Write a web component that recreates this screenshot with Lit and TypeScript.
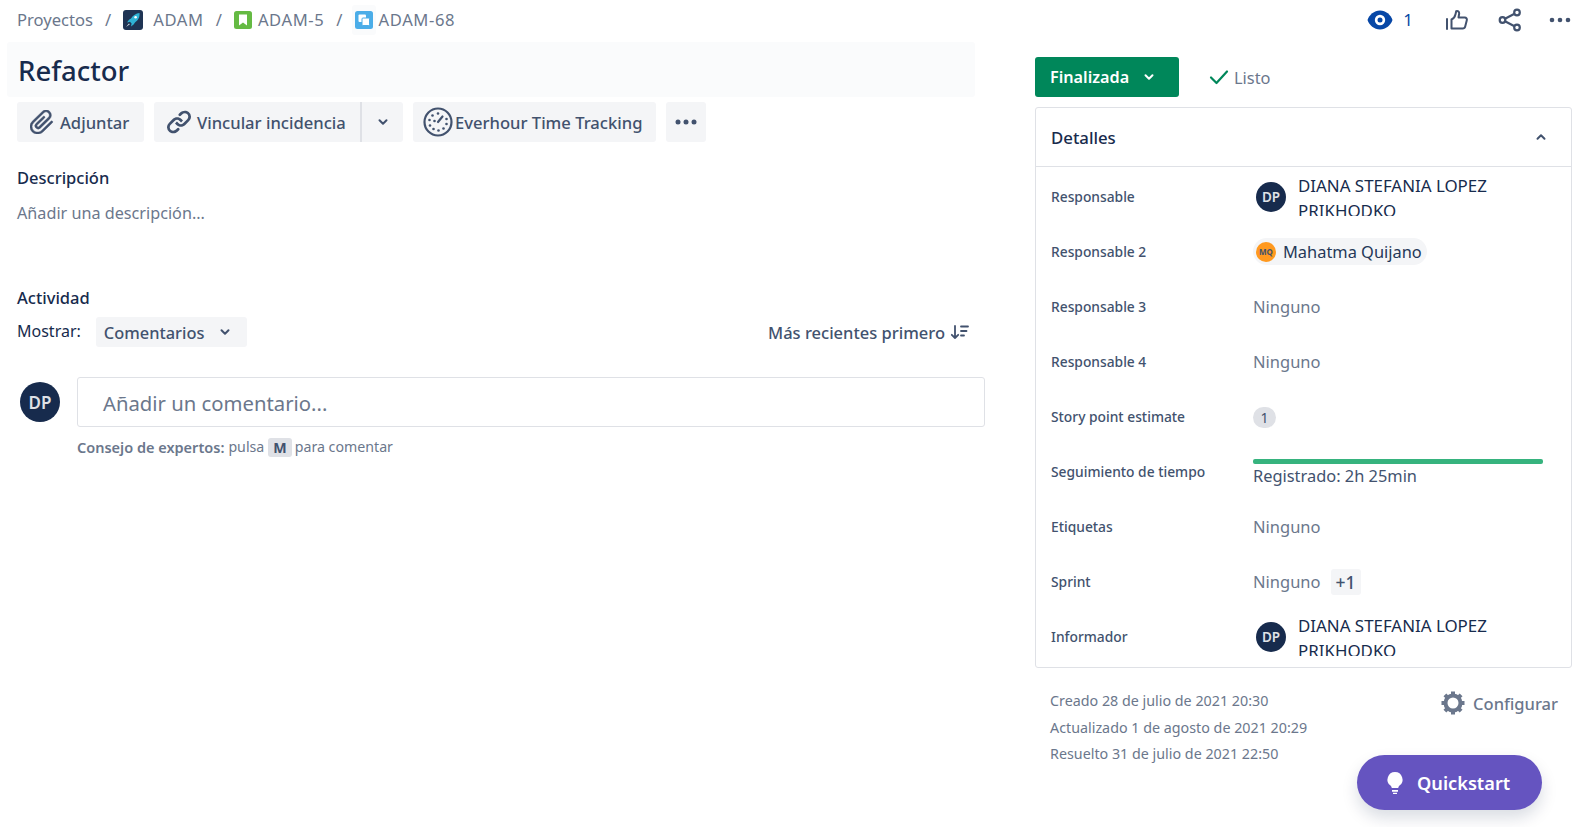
import { LitElement, html, css, svg } from 'lit';
import { customElement } from 'lit/decorators.js';

const chevronDown = html`<svg class="chev" viewBox="0 0 12 12" width="12" height="12"><path d="M2.5 4.2 6 7.7l3.5-3.5" fill="none" stroke="currentColor" stroke-width="2" stroke-linecap="round" stroke-linejoin="round"/></svg>`;

const rocket = svg`<rect width="20" height="20" rx="3" fill="#1f3454"/><path d="M16.5 3 C13 3.4 10 5.4 8 8.4L6 9.8l-2 2.6 3-.6 1.6 1.6-.6 3 2.6-2 1.4-2c3-2 5-5 4.5-9.4z" fill="#2fb3d6"/><circle cx="12.6" cy="7.2" r="1.3" fill="#fff"/><path d="M3 17l3-3.6.8.8z" fill="#e8f3f7"/>`;

const rows = [
  { label: 'Responsable', kind: 'person' },
  { label: 'Responsable 2', kind: 'chip' },
  { label: 'Responsable 3', kind: 'none' },
  { label: 'Responsable 4', kind: 'none' },
  { label: 'Story point estimate', kind: 'points' },
  { label: 'Seguimiento de tiempo', kind: 'time' },
  { label: 'Etiquetas', kind: 'none' },
  { label: 'Sprint', kind: 'sprint' },
  { label: 'Informador', kind: 'person' },
];

@customElement('app-root')
export class AppRoot extends LitElement {
  static styles = css`
    :host {
      display: block;
      font-family: 'Noto Sans', 'Open Sans', sans-serif;
      color: #172b4d;
      background: #fff;
    }

    .page {
      display: flex;
      height: 827px;
      overflow: hidden;
      position: relative;
    }

    .left {
      width: 1035px;
      flex: none;
      box-sizing: border-box;
      padding: 0 50px 0 17px;
    }

    .crumbs {
      display: flex;
      align-items: center;
      height: 39px;
      font-size: 16.6px;
      color: #6b778c;
    }

    .crumbs .code {
      letter-spacing: 0.6px;
    }

    .sep {
      margin: 0 12px;
    }

    .crumb-icon {
      display: flex;
      margin-right: 10px;
    }

    .crumb-icon.tight {
      margin-right: 6px;
    }

    .crumb-icon.hover {
      padding: 6px 3px;
      margin: 0 3px 0 -3px;
      background: #fafbfc;
      border-radius: 3px;
    }

    .title {
      margin: 3px 0 5px -10px;
      width: 968px;
      height: 55px;
      box-sizing: border-box;
      padding-left: 11px;
      background: #fafbfc;
      border-radius: 3px;
      font-size: 27.5px;
      font-weight: 500;
      line-height: 57px;
    }

    .actions {
      display: flex;
      gap: 10px;
    }

    .btn {
      display: flex;
      align-items: center;
      height: 40px;
      background: #f4f5f7;
      border-radius: 3px;
      color: #42526e;
      font-size: 16.6px;
      font-weight: 500;
      white-space: nowrap;
    }

    .btn.adjuntar {
      width: 127px;
      padding-left: 13px;
      gap: 6px;
      box-sizing: border-box;
    }

    .btn.vincular {
      width: 208px;
      padding-left: 13px;
      gap: 6px;
      box-sizing: border-box;
      border-right: 2px solid #dfe1e6;
      border-radius: 3px 0 0 3px;
    }

    .btn.drop {
      width: 41px;
      justify-content: center;
      margin-left: -10px;
      border-radius: 0 3px 3px 0;
    }

    .btn.everhour {
      width: 243px;
      padding-left: 10px;
      gap: 2px;
      box-sizing: border-box;
    }

    .btn.more {
      width: 40px;
      justify-content: center;
    }

    h2 {
      margin: 0;
      font-size: 16.5px;
      font-weight: 500;
      line-height: 24px;
    }

    .desc {
      margin-top: 24px;
    }

    .placeholder {
      margin-top: 11px;
      color: #6b778c;
      font-size: 16.2px;
      line-height: 24px;
    }

    .activity {
      margin-top: 61px;
    }

    .filter {
      display: flex;
      align-items: center;
      height: 30px;
      margin-top: 7px;
    }

    .filter-label {
      font-size: 16px;
      margin-right: 15px;
      margin-top: -3px;
    }

    .select {
      display: flex;
      align-items: center;
      gap: 15px;
      height: 30px;
      padding: 0 16px 0 8px;
      background: #f4f5f7;
      border-radius: 3px;
      color: #42526e;
      font-size: 16.4px;
      font-weight: 500;
    }

    .sort {
      margin-left: auto;
      display: flex;
      align-items: center;
      gap: 5px;
      padding-right: 15px;
      color: #42526e;
      font-size: 16.5px;
      font-weight: 500;
    }

    .composer {
      display: flex;
      margin-top: 30px;
      margin-left: 3px;
      gap: 17px;
    }

    .avatar {
      flex: none;
      border-radius: 50%;
      background: #172b4d;
      color: #dfe1e6;
      display: flex;
      align-items: center;
      justify-content: center;
      font-weight: 600;
    }

    .avatar.large {
      width: 40px;
      height: 40px;
      margin-top: 5px;
      font-size: 17px;
    }

    .composer-main {
      flex: 1;
    }

    .input {
      height: 50px;
      box-sizing: border-box;
      padding-left: 25px;
      border: 1px solid #dfe1e6;
      border-radius: 3px;
      color: #6b778c;
      font-size: 20.3px;
      line-height: 50px;
    }

    .tip {
      margin-top: 9px;
      display: flex;
      align-items: center;
      font-size: 14.2px;
      color: #6b778c;
      line-height: 22px;
    }

    .tip b {
      font-size: 14.5px;
      font-weight: 600;
      margin-right: 4px;
    }

    .key {
      margin: 0 3px 0 4px;
      padding: 0 5px;
      background: #dfe1e6;
      border-radius: 3px;
      color: #42526e;
      font-weight: 700;
      height: 19px;
      line-height: 19px;
    }

    .right {
      flex: 1;
      box-sizing: border-box;
      padding-right: 10px;
      min-width: 0;
    }

    .top-actions {
      height: 57px;
      display: flex;
      justify-content: flex-end;
      align-items: flex-start;
      margin-right: -10px;
      padding: 8px 11px 0 0;
      box-sizing: border-box;
      color: #42526e;
    }

    .watch {
      display: flex;
      align-items: center;
      gap: 10px;
      color: #0747a6;
      font-size: 17px;
      line-height: 24px;
      margin-right: 32px;
    }

    .icon-gap {
      margin-right: 29px;
      display: flex;
    }

    .icon-gap.share {
      margin-right: 27px;
    }

    .status-row {
      display: flex;
      align-items: center;
      height: 40px;
    }

    .status {
      display: flex;
      align-items: center;
      justify-content: space-between;
      box-sizing: border-box;
      width: 144px;
      height: 40px;
      padding: 0 24px 0 15px;
      border-radius: 3px;
      background: #00875a;
      color: #fff;
      font-size: 16.2px;
      font-weight: 600;
    }

    .done {
      display: flex;
      align-items: center;
      gap: 5px;
      margin-left: 30px;
      font-size: 16.4px;
      color: #6b778c;
    }

    .panel {
      margin-top: 10px;
      height: 561px;
      box-sizing: border-box;
      border: 1px solid #dfe1e6;
      border-radius: 3px;
      overflow: hidden;
    }

    .panel-head {
      display: flex;
      align-items: center;
      justify-content: space-between;
      height: 58px;
      padding: 0 24px 0 15px;
      border-bottom: 1px solid #dfe1e6;
      font-size: 16.8px;
      font-weight: 500;
    }

    .panel-head svg {
      color: #42526e;
    }

    .rows {
      padding-top: 2px;
    }

    .row {
      display: grid;
      grid-template-columns: 202px 1fr;
      align-items: center;
      height: 55px;
      padding-left: 15px;
    }

    .label {
      font-size: 13.8px;
      font-weight: 500;
      color: #42526e;
    }

    .person {
      display: flex;
      align-items: flex-start;
      height: 42px;
      overflow: hidden;
      margin-top: -3px;
    }

    .avatar.mid {
      width: 30px;
      height: 30px;
      margin: 8px 12px 0 3px;
      font-size: 13.5px;
    }

    .person-name {
      width: 210px;
      font-size: 16.9px;
      line-height: 24.5px;
    }

    .chip {
      display: inline-flex;
      align-items: center;
      gap: 7px;
      height: 27px;
      padding: 0 5px 0 3px;
      border-radius: 14px;
      background: #f4f5f7;
      font-size: 16.4px;
      color: #253858;
      margin-top: -1px;
    }

    .avatar.small {
      width: 20px;
      height: 20px;
      background: #ff991f;
      color: #42526e;
      font-size: 8px;
      font-weight: 700;
    }

    .none {
      font-size: 16.5px;
      color: #6b778c;
    }

    .points {
      display: inline-flex;
      align-items: center;
      justify-content: center;
      width: 23px;
      height: 21px;
      border-radius: 11px;
      background: #dfe1e6;
      color: #42526e;
      font-size: 14px;
      margin-top: -5px;
    }

    .time {
      margin-top: 4px;
    }

    .bar {
      height: 5px;
      width: 290px;
      border-radius: 2px;
      background: #36b37e;
    }

    .logged {
      font-size: 16.4px;
      color: #42526e;
      line-height: 24px;
    }

    .sprint {
      display: flex;
      align-items: center;
      gap: 10px;
    }

    .plus {
      padding: 0 5px;
      height: 26px;
      line-height: 26px;
      border-radius: 3px;
      background: #f4f5f7;
      color: #42526e;
      font-size: 17.5px;
      font-weight: 500;
    }

    .meta {
      display: flex;
      justify-content: space-between;
      margin-top: 20px;
      padding: 0 14px 0 15px;
    }

    .dates {
      font-size: 14.3px;
      line-height: 26.7px;
      color: #6b778c;
    }

    .config {
      display: flex;
      align-items: center;
      gap: 8px;
      height: 30px;
      color: #6b778c;
      font-size: 16.5px;
      font-weight: 500;
    }

    .quickstart {
      position: absolute;
      left: 1357px;
      top: 755px;
      width: 185px;
      height: 55px;
      box-sizing: border-box;
      display: flex;
      align-items: center;
      gap: 12px;
      padding-left: 28px;
      border-radius: 28px;
      background: #6554c0;
      color: #fff;
      font-size: 18.2px;
      font-weight: 600;
      box-shadow: 0 8px 16px rgba(9, 30, 66, 0.15);
    }
  `;

  private renderValue(kind: string) {
    if (kind === 'person') {
      return html`<div class="person">
        <div class="avatar mid">DP</div>
        <div class="person-name">DIANA STEFANIA LOPEZ PRIKHODKO</div>
      </div>`;
    }
    if (kind === 'chip') {
      return html`<div><span class="chip"><span class="avatar small">MQ</span>Mahatma Quijano</span></div>`;
    }
    if (kind === 'points') {
      return html`<div><span class="points">1</span></div>`;
    }
    if (kind === 'time') {
      return html`<div class="time"><div class="bar"></div><div class="logged">Registrado: 2h 25min</div></div>`;
    }
    if (kind === 'sprint') {
      return html`<div class="sprint"><span class="none">Ninguno</span><span class="plus">+1</span></div>`;
    }
    return html`<div class="none">Ninguno</div>`;
  }

  render() {
    return html`
      <div class="page">
        <div class="left">
          <div class="crumbs">
            <span>Proyectos</span>
            <span class="sep">/</span>
            <span class="crumb-icon"><svg width="20" height="20" viewBox="0 0 20 20">${rocket}</svg></span>
            <span class="code">ADAM</span>
            <span class="sep">/</span>
            <span class="crumb-icon tight"><svg width="18" height="18" viewBox="0 0 18 18"><rect width="18" height="18" rx="2.5" fill="#65ba43"/><path d="M5 3.5h8v11L9 11.5l-4 3z" fill="#fff"/></svg></span>
            <span class="code">ADAM-5</span>
            <span class="sep">/</span>
            <span class="crumb-icon hover"><svg width="18" height="18" viewBox="0 0 18 18"><rect width="18" height="18" rx="2.5" fill="#4bade8"/><rect x="3.5" y="3.5" width="7.5" height="7.5" rx="1" fill="#fff"/><rect x="7" y="7" width="7.5" height="7.5" rx="1" fill="#fff" stroke="#4bade8"/></svg></span>
            <span class="code">ADAM-68</span>
          </div>

          <div class="title">Refactor</div>

          <div class="actions">
            <div class="btn adjuntar">
              <svg width="24" height="24" viewBox="3.5 3.5 17 17"><path d="M11.643 17.965c-1.53 1.495-4.016 1.496-5.542.004a3.773 3.773 0 01.002-5.412l7.147-6.985a2.316 2.316 0 013.233-.003c.893.873.895 2.282.004 3.153l-6.703 6.55a.79.79 0 01-1.091-.008.742.742 0 01-.009-1.064l5.191-5.072a.75.75 0 00-1.048-1.073l-5.191 5.073a2.242 2.242 0 00.012 3.208 2.29 2.29 0 003.184.008l6.703-6.55a3.679 3.679 0 00-.004-5.298 3.816 3.816 0 00-5.33.003L5.054 11.484a5.273 5.273 0 00-.002 7.56c2.11 2.062 5.538 2.061 7.64-.004l6.686-6.533a.75.75 0 10-1.048-1.073l-6.687 6.533z" fill="#42526e" stroke="#42526e" stroke-width=".3"/></svg>
              Adjuntar
            </div>
            <div class="btn vincular">
              <svg width="24" height="24" viewBox="3 3.5 18 18"><g fill="#42526e"><path d="M12.856 5.457l-.937.92a1.002 1.002 0 000 1.437 1.047 1.047 0 001.463 0l.984-.966c.967-.95 2.542-1.135 3.602-.288a2.54 2.54 0 01.203 3.81l-2.903 2.852a2.646 2.646 0 01-3.696 0l-1.11-1.09L9 13.57l1.108 1.089c1.822 1.788 4.802 1.788 6.622 0l2.905-2.852a4.558 4.558 0 00-.357-6.82c-1.893-1.517-4.695-1.226-6.422.47"/><path d="M11.144 19.543l.937-.92a1.002 1.002 0 000-1.437 1.047 1.047 0 00-1.462 0l-.985.966c-.967.95-2.542 1.135-3.602.288a2.54 2.54 0 01-.203-3.81l2.903-2.852a2.646 2.646 0 013.696 0l1.11 1.09L15 11.43l-1.108-1.089c-1.822-1.788-4.802-1.788-6.622 0l-2.905 2.852a4.558 4.558 0 00.357 6.82c1.893 1.517 4.695 1.226 6.422-.47"/></g></svg>
              Vincular incidencia
            </div>
            <div class="btn drop">${chevronDown}</div>
            <div class="btn everhour">
              <svg width="30" height="30" viewBox="0 0 30 30"><circle cx="15" cy="15" r="13.5" fill="none" stroke="#42526e" stroke-width="2.2"/><path d="M15 15l4.5-5.5" stroke="#42526e" stroke-width="2.2" stroke-linecap="round"/><g fill="#42526e"><circle cx="15" cy="6.5" r="1.3"/><circle cx="9.5" cy="8.5" r="1.3"/><circle cx="6.5" cy="13" r="1.3"/><circle cx="7" cy="18.5" r="1.3"/><circle cx="10.5" cy="22" r="1.3"/><circle cx="15.5" cy="23.5" r="1.3"/><circle cx="20.5" cy="21.5" r="1.3"/><circle cx="23.5" cy="17" r="1.3"/><circle cx="23.5" cy="12" r="1.3"/><circle cx="11.5" cy="14" r="1.3"/></g></svg>
              Everhour Time Tracking
            </div>
            <div class="btn more">
              <svg width="24" height="6" viewBox="0 0 24 6"><g fill="#42526e"><circle cx="4" cy="3" r="2.5"/><circle cx="12" cy="3" r="2.5"/><circle cx="20" cy="3" r="2.5"/></g></svg>
            </div>
          </div>

          <h2 class="desc">Descripción</h2>
          <div class="placeholder">Añadir una descripción...</div>

          <h2 class="activity">Actividad</h2>
          <div class="filter">
            <span class="filter-label">Mostrar:</span>
            <div class="select">Comentarios ${chevronDown}</div>
            <div class="sort">
              Más recientes primero
              <svg width="20" height="16" viewBox="0 0 20 16"><g fill="none" stroke="#42526e" stroke-width="1.8" stroke-linecap="round" stroke-linejoin="round"><path d="M5 2v12M1.8 10.8 5 14l3.2-3.2"/><path d="M11 2.5h7M11 7h5.5M11 11.5h3"/></g></svg>
            </div>
          </div>

          <div class="composer">
            <div class="avatar large">DP</div>
            <div class="composer-main">
              <div class="input">Añadir un comentario...</div>
              <div class="tip">
                <b>Consejo de expertos:</b> pulsa <span class="key">M</span> para comentar
              </div>
            </div>
          </div>
        </div>

        <div class="right">
          <div class="top-actions">
            <div class="watch">
              <svg width="26" height="20" viewBox="0 0 26 20"><path d="M13 .5C7 .5 2.4 4.8.5 10c1.9 5.2 6.5 9.5 12.5 9.500s10.600-4.300 12.500-9.500C23.600 4.800 19 .5 13 .5z" fill="#0747a6"/><circle cx="13" cy="10" r="5.2" fill="#fff"/><circle cx="13" cy="10" r="2.5" fill="#0747a6"/></svg>
              1
            </div>
            <span class="icon-gap"><svg width="24" height="24" viewBox="0 0 24 24"><g fill="none" stroke="#42526e" stroke-width="2" stroke-linecap="round" stroke-linejoin="round"><path d="M2 11v10"/><path d="M6.5 11.5c2-.8 3.5-3 4-5.2L11.2 3.2c1.5-.8 3 .4 3 2.3l-.7 4h6.3c1.5 0 2.4 1.3 2 2.7l-1.6 6.3c-.3 1.2-1.3 2-2.5 2H6.5z"/></g></svg></span>
            <span class="icon-gap share"><svg width="24" height="24" viewBox="0 0 24 24"><g fill="none" stroke="#42526e" stroke-width="2.2"><circle cx="4.5" cy="12" r="2.8"/><circle cx="19" cy="4.5" r="2.8"/><circle cx="19" cy="19.5" r="2.8"/><path d="M7 10.7 16.5 5.8M7 13.3l9.500 4.900"/></g></svg></span>
            <svg width="22" height="24" viewBox="0 0 22 24"><g fill="#42526e"><circle cx="3" cy="12" r="2.3"/><circle cx="11" cy="12" r="2.3"/><circle cx="19" cy="12" r="2.3"/></g></svg>
          </div>

          <div class="status-row">
            <div class="status">Finalizada ${chevronDown}</div>
            <div class="done">
              <svg width="20" height="16" viewBox="0 0 20 16"><path d="M2 8.5 7.5 14 18 2.5" fill="none" stroke="#00875a" stroke-width="2.2" stroke-linecap="round" stroke-linejoin="round"/></svg>
              Listo
            </div>
          </div>

          <div class="panel">
            <div class="panel-head">
              Detalles
              <svg width="12" height="12" viewBox="0 0 12 12"><path d="M2.5 7.8 6 4.3l3.5 3.500" fill="none" stroke="currentColor" stroke-width="2" stroke-linecap="round" stroke-linejoin="round"/></svg>
            </div>
            <div class="rows">
              ${rows.map(
                (row) => html`<div class="row">
                  <span class="label">${row.label}</span>
                  ${this.renderValue(row.kind)}
                </div>`
              )}
            </div>
          </div>

          <div class="meta">
            <div class="dates">
              <div>Creado 28 de julio de 2021 20:30</div>
              <div>Actualizado 1 de agosto de 2021 20:29</div>
              <div>Resuelto 31 de julio de 2021 22:50</div>
            </div>
            <div class="config">
              <svg width="24" height="24" viewBox="0 0 24 24"><circle cx="12" cy="12" r="7.5" fill="none" stroke="#6b778c" stroke-width="4"/><g stroke="#6b778c" stroke-width="4"><path d="M12 .5v4M12 19.5v4M.5 12h4M19.5 12h4M3.900 3.900l2.800 2.800M17.300 17.300l2.800 2.800M3.900 20.100l2.800-2.800M17.300 6.700l2.800-2.800"/></g></svg>
              Configurar
            </div>
          </div>
        </div>

        <div class="quickstart">
          <svg width="20" height="24" viewBox="0 0 20 24"><path d="M10 1a7.5 7.5 0 0 0-4.500 13.500c.8.7 1.200 1.500 1.300 2.500h6.400c.1-1 .5-1.800 1.300-2.500A7.500 7.500 0 0 0 10 1z" fill="#fff"/><path d="M7 19h6v1.800H7zM8 21.800h4V23H8z" fill="#fff"/></svg>
          Quickstart
        </div>
      </div>
    `;
  }
}
